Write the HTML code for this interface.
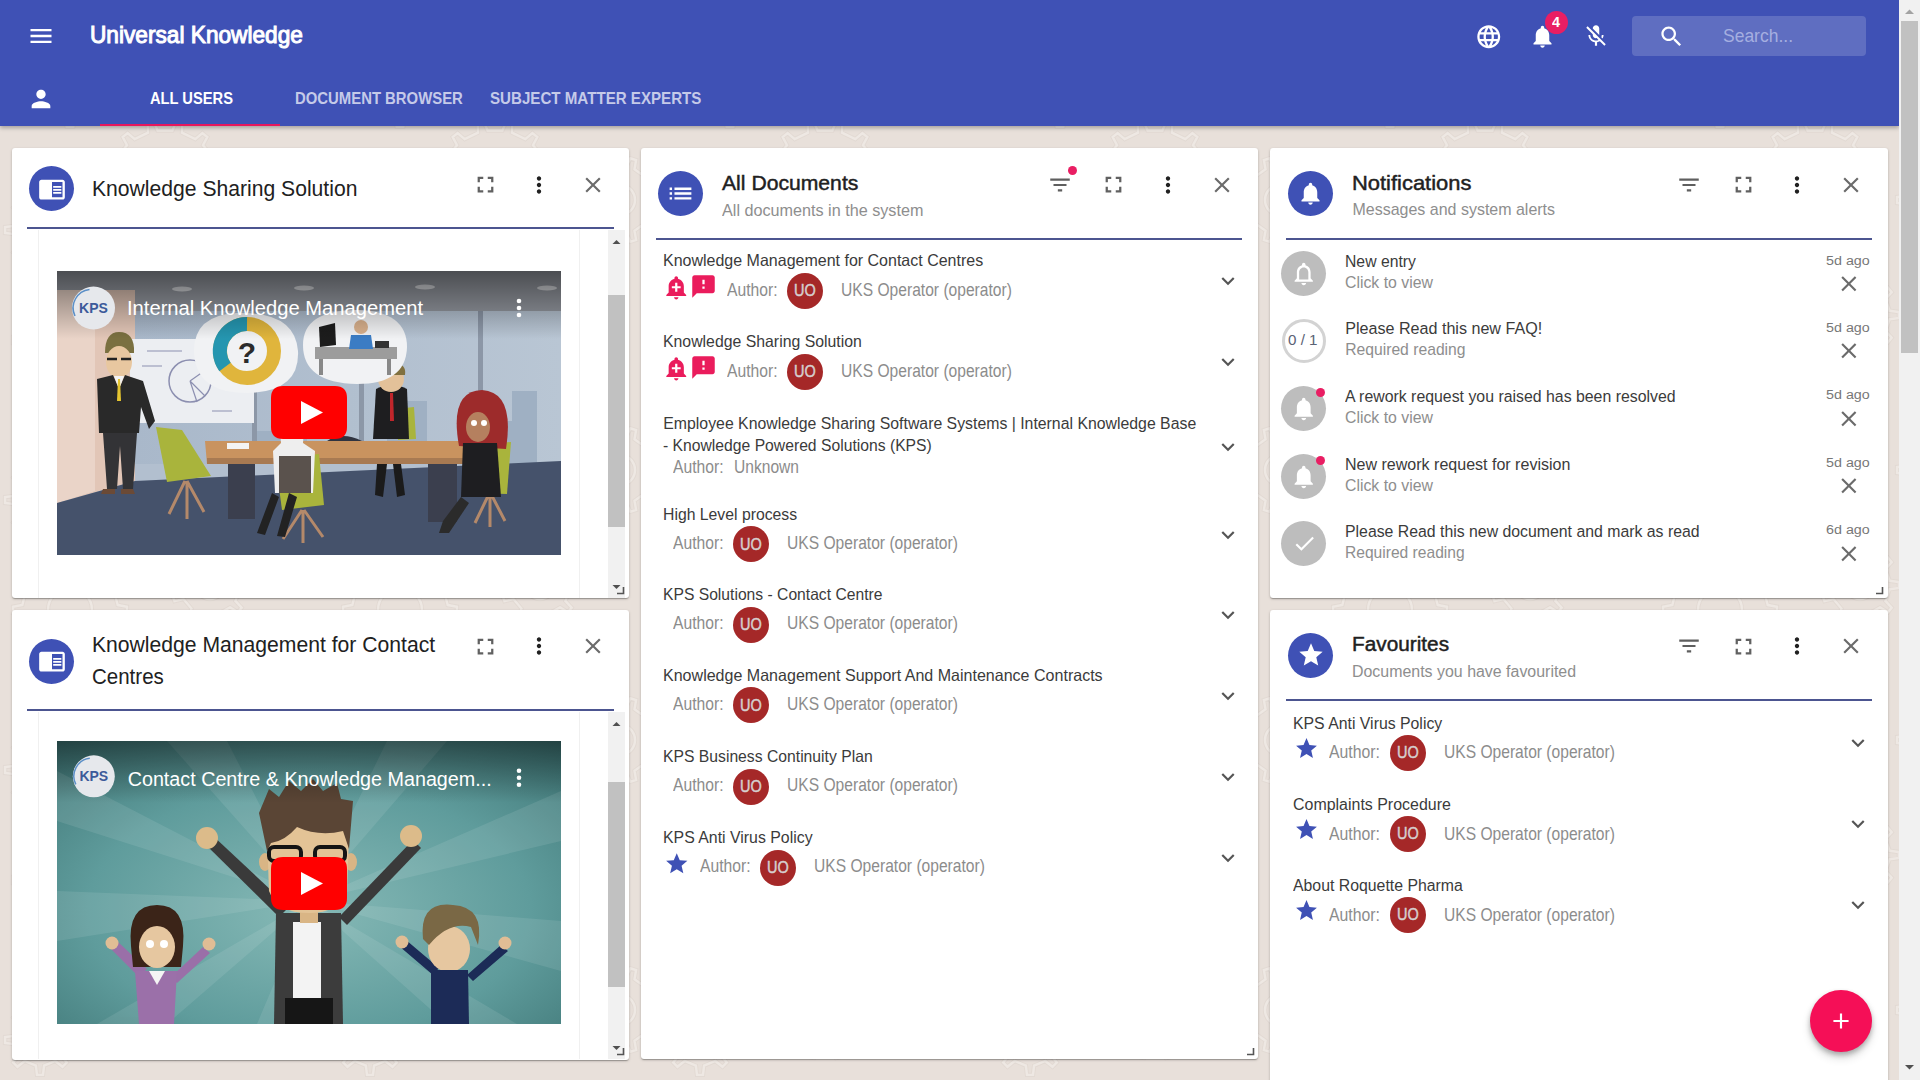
<!DOCTYPE html>
<html><head><meta charset="utf-8">
<style>
*{box-sizing:border-box;margin:0;padding:0}
html,body{width:1920px;height:1080px;overflow:hidden}
body{font-family:"Liberation Sans",sans-serif;background:#e9e1db;position:relative}
.abs{position:absolute}
svg.abs{display:block;overflow:visible}
.t{position:absolute;white-space:nowrap;line-height:normal;transform-origin:0 0}
.card{position:absolute;background:#fff;border-radius:3px;box-shadow:0 1px 3px rgba(0,0,0,.2),0 1px 1px rgba(0,0,0,.14),0 2px 1px -1px rgba(0,0,0,.12)}
</style></head><body>

<svg class="abs" style="left:0;top:0" width="1899" height="1080"><defs><pattern id="gp" width="330" height="270" patternUnits="userSpaceOnUse"><g fill="none" stroke="#dcd2cb" stroke-width="4.4" opacity=".45"><path d="M117.7 65.0 L126.9 66.7 L126.9 73.3 L117.7 75.0 L113.9 89.5 L120.9 95.6 L117.6 101.3 L108.8 98.2 L98.2 108.8 L101.3 117.6 L95.6 120.9 L89.5 113.9 L75.0 117.7 L73.3 126.9 L66.7 126.9 L65.0 117.7 L50.5 113.9 L44.4 120.9 L38.7 117.6 L41.8 108.8 L31.2 98.2 L22.4 101.3 L19.1 95.6 L26.1 89.5 L22.3 75.0 L13.1 73.3 L13.1 66.7 L22.3 65.0 L26.1 50.5 L19.1 44.4 L22.4 38.7 L31.2 41.8 L41.8 31.2 L38.7 22.4 L44.4 19.1 L50.5 26.1 L65.0 22.3 L66.7 13.1 L73.3 13.1 L75.0 22.3 L89.5 26.1 L95.6 19.1 L101.3 22.4 L98.2 31.2 L108.8 41.8 L117.6 38.7 L120.9 44.4 L113.9 50.5zM239.7 40.8 L248.9 42.0 L248.9 48.0 L239.7 49.2 L235.4 60.9 L241.7 67.7 L237.9 72.3 L230.1 67.3 L219.3 73.5 L219.7 82.8 L213.8 83.8 L211.0 75.0 L198.8 72.8 L193.1 80.2 L188.0 77.2 L191.5 68.6 L183.5 59.1 L174.5 61.1 L172.4 55.5 L180.7 51.2 L180.7 38.8 L172.4 34.5 L174.5 28.9 L183.5 30.9 L191.5 21.4 L188.0 12.8 L193.1 9.8 L198.8 17.2 L211.0 15.0 L213.8 6.2 L219.7 7.2 L219.3 16.5 L230.1 22.7 L237.9 17.7 L241.7 22.3 L235.4 29.1zM219.8 180.1 L228.9 181.8 L228.9 188.2 L219.8 189.9 L216.5 204.3 L224.0 209.9 L221.2 215.6 L212.2 213.2 L203.0 224.8 L207.3 233.0 L202.4 236.9 L195.3 230.9 L182.0 237.3 L182.3 246.6 L176.1 248.0 L172.4 239.5 L157.6 239.5 L153.9 248.0 L147.7 246.6 L148.0 237.3 L134.7 230.9 L127.6 236.9 L122.7 233.0 L127.0 224.8 L117.8 213.2 L108.8 215.6 L106.0 209.9 L113.5 204.3 L110.2 189.9 L101.1 188.2 L101.1 181.8 L110.2 180.1 L113.5 165.7 L106.0 160.1 L108.8 154.4 L117.8 156.8 L127.0 145.2 L122.7 137.0 L127.6 133.1 L134.7 139.1 L148.0 132.7 L147.7 123.4 L153.9 122.0 L157.6 130.5 L172.4 130.5 L176.1 122.0 L182.3 123.4 L182.0 132.7 L195.3 139.1 L202.4 133.1 L207.3 137.0 L203.0 145.2 L212.2 156.8 L221.2 154.4 L224.0 160.1 L216.5 165.7zM65.7 225.9 L74.9 227.0 L74.9 233.0 L65.7 234.1 L61.0 245.3 L66.8 252.5 L62.5 256.8 L55.3 251.0 L44.1 255.7 L43.0 264.9 L37.0 264.9 L35.9 255.7 L24.7 251.0 L17.5 256.8 L13.2 252.5 L19.0 245.3 L14.3 234.1 L5.1 233.0 L5.1 227.0 L14.3 225.9 L19.0 214.7 L13.2 207.5 L17.5 203.2 L24.7 209.0 L35.9 204.3 L37.0 195.1 L43.0 195.1 L44.1 204.3 L55.3 209.0 L62.5 203.2 L66.8 207.5 L61.0 214.7zM323.7 195.7 L332.9 197.0 L332.9 203.0 L323.7 204.3 L319.8 216.4 L326.5 222.8 L323.0 227.6 L314.8 223.3 L304.5 230.8 L306.1 239.9 L300.4 241.7 L296.4 233.4 L283.6 233.4 L279.6 241.7 L273.9 239.9 L275.5 230.8 L265.2 223.3 L257.0 227.6 L253.5 222.8 L260.2 216.4 L256.3 204.3 L247.1 203.0 L247.1 197.0 L256.3 195.7 L260.2 183.6 L253.5 177.2 L257.0 172.4 L265.2 176.7 L275.5 169.2 L273.9 160.1 L279.6 158.3 L283.6 166.6 L296.4 166.6 L300.4 158.3 L306.1 160.1 L304.5 169.2 L314.8 176.7 L323.0 172.4 L326.5 177.2 L319.8 183.6z"/><circle cx="70" cy="70" r="22"/><circle cx="210" cy="45" r="14"/><circle cx="165" cy="185" r="25"/><circle cx="40" cy="230" r="12"/><circle cx="290" cy="200" r="15"/></g><g fill="none" stroke="#eee8e3" stroke-width="2.4"><path d="M117.7 65.0 L126.9 66.7 L126.9 73.3 L117.7 75.0 L113.9 89.5 L120.9 95.6 L117.6 101.3 L108.8 98.2 L98.2 108.8 L101.3 117.6 L95.6 120.9 L89.5 113.9 L75.0 117.7 L73.3 126.9 L66.7 126.9 L65.0 117.7 L50.5 113.9 L44.4 120.9 L38.7 117.6 L41.8 108.8 L31.2 98.2 L22.4 101.3 L19.1 95.6 L26.1 89.5 L22.3 75.0 L13.1 73.3 L13.1 66.7 L22.3 65.0 L26.1 50.5 L19.1 44.4 L22.4 38.7 L31.2 41.8 L41.8 31.2 L38.7 22.4 L44.4 19.1 L50.5 26.1 L65.0 22.3 L66.7 13.1 L73.3 13.1 L75.0 22.3 L89.5 26.1 L95.6 19.1 L101.3 22.4 L98.2 31.2 L108.8 41.8 L117.6 38.7 L120.9 44.4 L113.9 50.5zM239.7 40.8 L248.9 42.0 L248.9 48.0 L239.7 49.2 L235.4 60.9 L241.7 67.7 L237.9 72.3 L230.1 67.3 L219.3 73.5 L219.7 82.8 L213.8 83.8 L211.0 75.0 L198.8 72.8 L193.1 80.2 L188.0 77.2 L191.5 68.6 L183.5 59.1 L174.5 61.1 L172.4 55.5 L180.7 51.2 L180.7 38.8 L172.4 34.5 L174.5 28.9 L183.5 30.9 L191.5 21.4 L188.0 12.8 L193.1 9.8 L198.8 17.2 L211.0 15.0 L213.8 6.2 L219.7 7.2 L219.3 16.5 L230.1 22.7 L237.9 17.7 L241.7 22.3 L235.4 29.1zM219.8 180.1 L228.9 181.8 L228.9 188.2 L219.8 189.9 L216.5 204.3 L224.0 209.9 L221.2 215.6 L212.2 213.2 L203.0 224.8 L207.3 233.0 L202.4 236.9 L195.3 230.9 L182.0 237.3 L182.3 246.6 L176.1 248.0 L172.4 239.5 L157.6 239.5 L153.9 248.0 L147.7 246.6 L148.0 237.3 L134.7 230.9 L127.6 236.9 L122.7 233.0 L127.0 224.8 L117.8 213.2 L108.8 215.6 L106.0 209.9 L113.5 204.3 L110.2 189.9 L101.1 188.2 L101.1 181.8 L110.2 180.1 L113.5 165.7 L106.0 160.1 L108.8 154.4 L117.8 156.8 L127.0 145.2 L122.7 137.0 L127.6 133.1 L134.7 139.1 L148.0 132.7 L147.7 123.4 L153.9 122.0 L157.6 130.5 L172.4 130.5 L176.1 122.0 L182.3 123.4 L182.0 132.7 L195.3 139.1 L202.4 133.1 L207.3 137.0 L203.0 145.2 L212.2 156.8 L221.2 154.4 L224.0 160.1 L216.5 165.7zM65.7 225.9 L74.9 227.0 L74.9 233.0 L65.7 234.1 L61.0 245.3 L66.8 252.5 L62.5 256.8 L55.3 251.0 L44.1 255.7 L43.0 264.9 L37.0 264.9 L35.9 255.7 L24.7 251.0 L17.5 256.8 L13.2 252.5 L19.0 245.3 L14.3 234.1 L5.1 233.0 L5.1 227.0 L14.3 225.9 L19.0 214.7 L13.2 207.5 L17.5 203.2 L24.7 209.0 L35.9 204.3 L37.0 195.1 L43.0 195.1 L44.1 204.3 L55.3 209.0 L62.5 203.2 L66.8 207.5 L61.0 214.7zM323.7 195.7 L332.9 197.0 L332.9 203.0 L323.7 204.3 L319.8 216.4 L326.5 222.8 L323.0 227.6 L314.8 223.3 L304.5 230.8 L306.1 239.9 L300.4 241.7 L296.4 233.4 L283.6 233.4 L279.6 241.7 L273.9 239.9 L275.5 230.8 L265.2 223.3 L257.0 227.6 L253.5 222.8 L260.2 216.4 L256.3 204.3 L247.1 203.0 L247.1 197.0 L256.3 195.7 L260.2 183.6 L253.5 177.2 L257.0 172.4 L265.2 176.7 L275.5 169.2 L273.9 160.1 L279.6 158.3 L283.6 166.6 L296.4 166.6 L300.4 158.3 L306.1 160.1 L304.5 169.2 L314.8 176.7 L323.0 172.4 L326.5 177.2 L319.8 183.6z"/><circle cx="70" cy="70" r="22"/><circle cx="210" cy="45" r="14"/><circle cx="165" cy="185" r="25"/><circle cx="40" cy="230" r="12"/><circle cx="290" cy="200" r="15"/></g></pattern></defs><rect width="1899" height="1080" fill="#e8e0da"/><rect width="1899" height="1080" fill="url(#gp)"/></svg>
<div class="abs" style="left:0px;top:0px;width:1899px;height:126px;background:#3f51b5;box-shadow:0 2px 4px rgba(0,0,0,.28)"></div>
<svg class="abs" style="left:26.70px;top:22.40px;" width="28" height="28" viewBox="0 0 24 24"><path fill="#fff" d="M3 18h18v-2H3v2zm0-5h18v-2H3v2zm0-7v2h18V6H3z"/></svg>
<div class="t" style="left:89.50px;top:20.63px;font-size:24.71px;color:#fff;-webkit-text-stroke:1.05px #fff;transform:scaleX(0.9176);">Universal Knowledge</div>
<svg class="abs" style="left:26.50px;top:84.50px;" width="28" height="28" viewBox="0 0 24 24"><path fill="#fff" d="M12 12c2.21 0 4-1.79 4-4s-1.79-4-4-4-4 1.790-4 4 1.79 4 4 4zm0 2c-2.67 0-8 1.34-8 4v2h16v-2c0-2.66-5.33-4-8-4z"/></svg>
<div class="t" style="left:149.70px;top:88.34px;font-size:17.30px;color:#fff;font-weight:bold;transform:scaleX(0.8494);">ALL USERS</div>
<div class="t" style="left:295.00px;top:88.34px;font-size:17.30px;color:#c5cae9;font-weight:bold;transform:scaleX(0.8612);">DOCUMENT BROWSER</div>
<div class="t" style="left:490.30px;top:88.34px;font-size:17.30px;color:#c5cae9;font-weight:bold;transform:scaleX(0.8749);">SUBJECT MATTER EXPERTS</div>
<div class="abs" style="left:100px;top:124px;width:180px;height:2px;background:#e8175d"></div>
<svg class="abs" style="left:1474.75px;top:22.65px;" width="27.5" height="27.5" viewBox="0 0 24 24"><path fill="#fff" d="M11.99 2C6.47 2 2 6.48 2 12s4.47 10 9.99 10C17.52 22 22 17.52 22 12S17.52 2 11.99 2zm6.93 6h-2.950c-.32-1.25-.78-2.45-1.38-3.56 1.84.63 3.37 1.91 4.33 3.56zM12 4.04c.83 1.2 1.48 2.53 1.91 3.96h-3.82c.43-1.43 1.08-2.76 1.91-3.96zM4.26 14C4.1 13.36 4 12.69 4 12s.1-1.36.26-2h3.38c-.08.66-.14 1.32-.14 2 0 .68.06 1.34.14 2H4.26zm.82 2h2.95c.32 1.25.78 2.45 1.38 3.56-1.84-.63-3.37-1.9-4.33-3.56zm2.95-8H5.08c.96-1.66 2.49-2.93 4.33-3.56C8.81 5.55 8.35 6.75 8.03 8zM12 19.96c-.83-1.2-1.48-2.53-1.91-3.96h3.82c-.43 1.43-1.08 2.76-1.91 3.960zM14.34 14H9.66c-.09-.66-.16-1.32-.16-2 0-.68.07-1.35.16-2h4.68c.09.65.16 1.32.16 2 0 .68-.07 1.34-.16 2zm.25 5.56c.6-1.11 1.06-2.31 1.38-3.56h2.95c-.96 1.65-2.49 2.93-4.33 3.56zM16.36 14c.08-.66.14-1.32.14-2 0-.68-.06-1.34-.14-2h3.38c.16.64.26 1.31.26 2s-.1 1.36-.26 2h-3.38z"/></svg>
<svg class="abs" style="left:1528.90px;top:23.20px;" width="27" height="27" viewBox="0 0 24 24"><path fill="#fff" d="M12 22c1.1 0 2-.9 2-2h-4c0 1.1.89 2 2 2zm6-6v-5c0-3.07-1.64-5.64-4.5-6.32V4c0-.83-.67-1.5-1.5-1.5s-1.5.67-1.5 1.5v.68C7.63 5.36 6 7.92 6 11v5l-2 2v1h16v-1l-2-2z"/></svg>
<div class="abs" style="left:1544.5px;top:11.0px;width:23px;height:23px;border-radius:50%;background:#e91e63"></div>
<div class="t" style="left:1552.00px;top:13.84px;font-size:14.54px;color:#fff;font-weight:bold;transform:scaleX(0.9896);">4</div>
<svg class="abs" style="left:1583.40px;top:23.00px;" width="26" height="26" viewBox="0 0 24 24"><path fill="#fff" d="M19 11h-1.7c0 .74-.16 1.43-.43 2.05l1.23 1.23c.56-.98.9-2.09.9-3.28zm-4.02.17c0-.06.02-.11.02-.17V5c0-1.66-1.34-3-3-3S9 3.34 9 5v.18l5.98 5.99zM4.27 3L3 4.27l6.01 6.01V11c0 1.66 1.33 3 2.99 3 .22 0 .44-.03.65-.08l1.66 1.66c-.71.33-1.5.52-2.31.52-2.76 0-5.3-2.1-5.3-5.1H5c0 3.41 2.72 6.23 6 6.72V21h2v-3.28c.91-.13 1.77-.45 2.54-.9L19.73 21 21 19.73 4.27 3z"/></svg>
<div class="abs" style="left:1632px;top:16px;width:234px;height:40px;background:rgba(255,255,255,.17);border-radius:4px"></div>
<svg class="abs" style="left:1657.50px;top:23.00px;" width="27" height="27" viewBox="0 0 24 24"><path fill="#fff" d="M15.5 14h-.79l-.28-.27C15.41 12.59 16 11.11 16 9.5 16 5.91 13.09 3 9.5 3S3 5.91 3 9.5 5.91 16 9.5 16c1.61 0 3.09-.59 4.23-1.57l.27.28v.79l5 4.99L20.490 19l-4.99-5zm-6 0C7.01 14 5 11.99 5 9.5S7.01 5 9.5 5 14 7.01 14 9.5 11.99 14 9.5 14z"/></svg>
<div class="t" style="left:1722.50px;top:24.83px;font-size:19.19px;color:#a5aee0;transform:scaleX(0.9116);">Search...</div>
<div class="abs" style="left:1899px;top:0px;width:21px;height:1080px;background:#f1f1f1"></div>
<div class="abs" style="left:1901px;top:21px;width:17px;height:331.6px;background:#c1c1c1"></div>
<svg class="abs" style="left:1899px;top:3px" width="21" height="18"><path d="M6 11 L10.5 6.5 L15 11z" fill="#a3a3a3"/></svg>
<svg class="abs" style="left:1899px;top:1058px" width="21" height="18"><path d="M6 7 L10.5 11.5 L15 7z" fill="#505050"/></svg>
<div class="card" style="left:11.5px;top:148px;width:617.17px;height:450px"></div>
<div class="card" style="left:11.5px;top:609.5px;width:617.17px;height:450px"></div>
<div class="card" style="left:640.67px;top:148px;width:617.67px;height:911px"></div>
<div class="card" style="left:1270.33px;top:148px;width:617.67px;height:450px"></div>
<div class="card" style="left:1270.33px;top:609.5px;width:617.67px;height:600px"></div>
<div class="abs" style="left:29.299999999999997px;top:166.2px;width:45px;height:45px;border-radius:50%;background:#3f51b5"></div>
<svg class="abs" style="left:37.80px;top:174.70px;" width="28" height="28" viewBox="0 0 24 24"><path fill="#fff" d="M13 12h7v1.5h-7zm0-2.5h7V11h-7zm0 5h7V16h-7zM21 4H3c-1.1 0-2 .9-2 2v13c0 1.1.9 2 2 2h18c1.1 0 2-.9 2-2V6c0-1.1-.9-2-2-2zm0 15h-9V6h9v13z"/></svg>
<div class="t" style="left:92.00px;top:175.60px;font-size:22.53px;color:#212121;transform:scaleX(0.9382);">Knowledge Sharing Solution</div>
<svg class="abs" style="left:471.50px;top:171.20px;" width="27" height="27" viewBox="0 0 24 24"><path fill="#616161" d="M7 14H5v5h5v-2H7v-3zm-2-4h2V7h3V5H5v5zm12 7h-3v2h5v-5h-2v3zM14 5v2h3v3h2V5h-5z"/></svg>
<svg class="abs" style="left:525.75px;top:171.70px;" width="26" height="26" viewBox="0 0 24 24"><path fill="#212121" d="M12 8c1.1 0 2-.9 2-2s-.9-2-2-2-2 .9-2 2 .9 2 2 2zm0 2c-1.1 0-2 .9-2 2s.9 2 2 2 2-.9 2-2-.9-2-2-2zm0 6c-1.1 0-2 .9-2 2s.9 2 2 2 2-.9 2-2-.9-2-2-2z"/></svg>
<svg class="abs" style="left:579.50px;top:171.70px;" width="26" height="26" viewBox="0 0 24 24"><path fill="#6b6b6b" d="M19 6.41L17.59 5 12 10.59 6.41 5 5 6.41 10.59 12 5 17.59 6.41 19 12 13.41 17.59 19 19 17.59 13.41 12z"/></svg>
<div class="abs" style="left:27px;top:227px;width:587px;height:2px;background:#4c5590"></div>
<div class="abs" style="left:29.299999999999997px;top:638.5px;width:45px;height:45px;border-radius:50%;background:#3f51b5"></div>
<svg class="abs" style="left:37.80px;top:647.00px;" width="28" height="28" viewBox="0 0 24 24"><path fill="#fff" d="M13 12h7v1.5h-7zm0-2.5h7V11h-7zm0 5h7V16h-7zM21 4H3c-1.1 0-2 .9-2 2v13c0 1.1.9 2 2 2h18c1.1 0 2-.9 2-2V6c0-1.1-.9-2-2-2zm0 15h-9V6h9v13z"/></svg>
<div class="t" style="left:92.00px;top:632.63px;font-size:21.51px;color:#212121;transform:scaleX(0.9831);">Knowledge Management for Contact</div>
<div class="t" style="left:92.00px;top:665.46px;font-size:21.37px;color:#212121;transform:scaleX(0.9597);">Centres</div>
<svg class="abs" style="left:471.50px;top:632.80px;" width="27" height="27" viewBox="0 0 24 24"><path fill="#616161" d="M7 14H5v5h5v-2H7v-3zm-2-4h2V7h3V5H5v5zm12 7h-3v2h5v-5h-2v3zM14 5v2h3v3h2V5h-5z"/></svg>
<svg class="abs" style="left:525.75px;top:633.30px;" width="26" height="26" viewBox="0 0 24 24"><path fill="#212121" d="M12 8c1.1 0 2-.9 2-2s-.9-2-2-2-2 .9-2 2 .9 2 2 2zm0 2c-1.1 0-2 .9-2 2s.9 2 2 2 2-.9 2-2-.9-2-2-2zm0 6c-1.1 0-2 .9-2 2s.9 2 2 2 2-.9 2-2-.9-2-2-2z"/></svg>
<svg class="abs" style="left:579.50px;top:633.30px;" width="26" height="26" viewBox="0 0 24 24"><path fill="#6b6b6b" d="M19 6.41L17.59 5 12 10.59 6.41 5 5 6.41 10.59 12 5 17.59 6.41 19 12 13.41 17.59 19 19 17.59 13.41 12z"/></svg>
<div class="abs" style="left:27px;top:709px;width:587px;height:2px;background:#4c5590"></div>
<div class="abs" style="left:658.1px;top:171.1px;width:45px;height:45px;border-radius:50%;background:#3f51b5"></div>
<svg class="abs" style="left:666.10px;top:179.10px;" width="29" height="29" viewBox="0 0 24 24"><path fill="#fff" d="M3 13h2v-2H3v2zm0 4h2v-2H3v2zm0-8h2V7H3v2zm4 4h14v-2H7v2zm0 4h14v-2H7v2zM7 7v2h14V7H7z"/></svg>
<div class="t" style="left:721.90px;top:171.15px;font-size:20.49px;color:#212121;-webkit-text-stroke:0.45px #212121;transform:scaleX(1.0323);">All Documents</div>
<div class="t" style="left:721.90px;top:200.95px;font-size:16.35px;color:#8e8e8e;transform:scaleX(0.9898);">All documents in the system</div>
<svg class="abs" style="left:1046.50px;top:171.80px;" width="26" height="26" viewBox="0 0 24 24"><path fill="#5f5f5f" d="M10 18h4v-2h-4v2zM3 6v2h18V6H3zm3 7h12v-2H6v2z"/></svg>
<div class="abs" style="left:1068.0px;top:166.3px;width:9px;height:9px;border-radius:50%;background:#e91e63"></div>
<svg class="abs" style="left:1100.30px;top:171.30px;" width="27" height="27" viewBox="0 0 24 24"><path fill="#616161" d="M7 14H5v5h5v-2H7v-3zm-2-4h2V7h3V5H5v5zm12 7h-3v2h5v-5h-2v3zM14 5v2h3v3h2V5h-5z"/></svg>
<svg class="abs" style="left:1154.60px;top:171.80px;" width="26" height="26" viewBox="0 0 24 24"><path fill="#212121" d="M12 8c1.1 0 2-.9 2-2s-.9-2-2-2-2 .9-2 2 .9 2 2 2zm0 2c-1.1 0-2 .9-2 2s.9 2 2 2 2-.9 2-2-.9-2-2-2zm0 6c-1.1 0-2 .9-2 2s.9 2 2 2 2-.9 2-2-.9-2-2-2z"/></svg>
<svg class="abs" style="left:1208.50px;top:171.80px;" width="26" height="26" viewBox="0 0 24 24"><path fill="#6b6b6b" d="M19 6.41L17.59 5 12 10.59 6.41 5 5 6.41 10.59 12 5 17.59 6.41 19 12 13.41 17.59 19 19 17.59 13.41 12z"/></svg>
<div class="abs" style="left:656px;top:237.5px;width:586px;height:2px;background:#4c5590"></div>
<div class="abs" style="left:1288.0px;top:170.8px;width:45px;height:45px;border-radius:50%;background:#3f51b5"></div>
<svg class="abs" style="left:1297.00px;top:179.80px;" width="27" height="27" viewBox="0 0 24 24"><path fill="#fff" d="M12 22c1.1 0 2-.9 2-2h-4c0 1.1.89 2 2 2zm6-6v-5c0-3.07-1.64-5.64-4.5-6.32V4c0-.83-.67-1.5-1.5-1.5s-1.5.67-1.5 1.5v.68C7.63 5.36 6 7.92 6 11v5l-2 2v1h16v-1l-2-2z"/></svg>
<div class="t" style="left:1351.50px;top:171.32px;font-size:20.64px;color:#212121;-webkit-text-stroke:0.45px #212121;transform:scaleX(1.0630);">Notifications</div>
<div class="t" style="left:1352.50px;top:201.03px;font-size:15.99px;color:#8e8e8e;">Messages and system alerts</div>
<svg class="abs" style="left:1676.00px;top:171.80px;" width="26" height="26" viewBox="0 0 24 24"><path fill="#5f5f5f" d="M10 18h4v-2h-4v2zM3 6v2h18V6H3zm3 7h12v-2H6v2z"/></svg>
<svg class="abs" style="left:1729.50px;top:171.30px;" width="27" height="27" viewBox="0 0 24 24"><path fill="#616161" d="M7 14H5v5h5v-2H7v-3zm-2-4h2V7h3V5H5v5zm12 7h-3v2h5v-5h-2v3zM14 5v2h3v3h2V5h-5z"/></svg>
<svg class="abs" style="left:1784.00px;top:171.80px;" width="26" height="26" viewBox="0 0 24 24"><path fill="#212121" d="M12 8c1.1 0 2-.9 2-2s-.9-2-2-2-2 .9-2 2 .9 2 2 2zm0 2c-1.1 0-2 .9-2 2s.9 2 2 2 2-.9 2-2-.9-2-2-2zm0 6c-1.1 0-2 .9-2 2s.9 2 2 2 2-.9 2-2-.9-2-2-2z"/></svg>
<svg class="abs" style="left:1838.00px;top:171.80px;" width="26" height="26" viewBox="0 0 24 24"><path fill="#6b6b6b" d="M19 6.41L17.59 5 12 10.59 6.41 5 5 6.41 10.59 12 5 17.59 6.41 19 12 13.41 17.59 19 19 17.59 13.41 12z"/></svg>
<div class="abs" style="left:1286px;top:237.5px;width:586px;height:2px;background:#4c5590"></div>
<div class="abs" style="left:1288.0px;top:632.5px;width:45px;height:45px;border-radius:50%;background:#3f51b5"></div>
<svg class="abs" style="left:1296.50px;top:641.00px;" width="28" height="28" viewBox="0 0 24 24"><path fill="#fff" d="M12 17.27L18.18 21l-1.64-7.03L22 9.24l-7.19-.61L12 2 9.19 8.63 2 9.24l5.46 4.73L5.82 21z"/></svg>
<div class="t" style="left:1352.00px;top:632.48px;font-size:20.79px;color:#212121;-webkit-text-stroke:0.45px #212121;">Favourites</div>
<div class="t" style="left:1351.50px;top:663.16px;font-size:15.84px;color:#8e8e8e;transform:scaleX(1.0067);">Documents you have favourited</div>
<svg class="abs" style="left:1676.00px;top:633.30px;" width="26" height="26" viewBox="0 0 24 24"><path fill="#5f5f5f" d="M10 18h4v-2h-4v2zM3 6v2h18V6H3zm3 7h12v-2H6v2z"/></svg>
<svg class="abs" style="left:1729.50px;top:632.80px;" width="27" height="27" viewBox="0 0 24 24"><path fill="#616161" d="M7 14H5v5h5v-2H7v-3zm-2-4h2V7h3V5H5v5zm12 7h-3v2h5v-5h-2v3zM14 5v2h3v3h2V5h-5z"/></svg>
<svg class="abs" style="left:1784.00px;top:633.30px;" width="26" height="26" viewBox="0 0 24 24"><path fill="#212121" d="M12 8c1.1 0 2-.9 2-2s-.9-2-2-2-2 .9-2 2 .9 2 2 2zm0 2c-1.1 0-2 .9-2 2s.9 2 2 2 2-.9 2-2-.9-2-2-2zm0 6c-1.1 0-2 .9-2 2s.9 2 2 2 2-.9 2-2-.9-2-2-2z"/></svg>
<svg class="abs" style="left:1838.00px;top:633.30px;" width="26" height="26" viewBox="0 0 24 24"><path fill="#6b6b6b" d="M19 6.41L17.59 5 12 10.59 6.41 5 5 6.41 10.59 12 5 17.59 6.41 19 12 13.41 17.59 19 19 17.59 13.41 12z"/></svg>
<div class="abs" style="left:1286px;top:699.3px;width:586px;height:2px;background:#4c5590"></div>
<div class="t" style="left:663.30px;top:251.37px;font-size:16.72px;color:#3b3b3b;transform:scaleX(0.9578);">Knowledge Management for Contact Centres</div>
<svg class="abs" style="left:663.35px;top:273.65px;" width="26.5" height="26.5" viewBox="0 0 24 24"><path fill="#ea1c5c" d="M10.01 21.01c0 1.1.89 1.99 1.99 1.99s1.99-.89 1.99-1.99h-3.98zm8.87-4.19V11c0-3.25-2.25-5.970-5.29-6.69v-.72C13.59 2.71 12.88 2 12 2s-1.59.71-1.59 1.59v.72C7.37 5.03 5.12 7.75 5.12 11v5.82L3 18.94V20h18v-1.06l-2.12-2.12zM16 13.01h-3v3h-2v-3H8V11h3V8h2v3h3v2.01z"/></svg>
<svg class="abs" style="left:690.00px;top:273.20px;" width="27" height="27" viewBox="0 0 24 24"><path fill="#ea1c5c" d="M20 2H4c-1.1 0-1.99.9-1.99 2L2 22l4-4h14c1.1 0 2-.9 2-2V4c0-1.1-.9-2-2-2zm-7 12h-2v-2h2v2zm0-4h-2V6h2v4z"/></svg>
<div class="t" style="left:726.50px;top:279.78px;font-size:18.02px;color:#8c8c8c;transform:scaleX(0.8690);">Author:</div>
<div class="abs" style="left:787.0px;top:273.1px;width:36px;height:36px;border-radius:50%;background:#a52828"></div>
<div class="t" style="left:794.00px;top:281.23px;font-size:16.42px;color:#d6cfcf;-webkit-text-stroke:0.45px #d6cfcf;transform:scaleX(0.8848);">UO</div>
<div class="t" style="left:841.00px;top:279.78px;font-size:18.02px;color:#8c8c8c;transform:scaleX(0.8665);">UKS Operator (operator)</div>
<svg class="abs" style="left:1214.50px;top:268.40px;" width="26" height="26" viewBox="0 0 24 24"><path fill="#555" d="M16.59 8.59L12 13.17 7.41 8.59 6 10l6 6 6-6z"/></svg>
<div class="t" style="left:663.30px;top:332.37px;font-size:16.72px;color:#3b3b3b;transform:scaleX(0.9475);">Knowledge Sharing Solution</div>
<svg class="abs" style="left:663.35px;top:354.65px;" width="26.5" height="26.5" viewBox="0 0 24 24"><path fill="#ea1c5c" d="M10.01 21.01c0 1.1.89 1.99 1.99 1.99s1.99-.89 1.99-1.99h-3.98zm8.87-4.19V11c0-3.25-2.25-5.970-5.29-6.69v-.72C13.59 2.71 12.88 2 12 2s-1.59.71-1.59 1.59v.72C7.37 5.03 5.12 7.75 5.12 11v5.82L3 18.94V20h18v-1.06l-2.12-2.12zM16 13.01h-3v3h-2v-3H8V11h3V8h2v3h3v2.01z"/></svg>
<svg class="abs" style="left:690.00px;top:354.20px;" width="27" height="27" viewBox="0 0 24 24"><path fill="#ea1c5c" d="M20 2H4c-1.1 0-1.99.9-1.99 2L2 22l4-4h14c1.1 0 2-.9 2-2V4c0-1.1-.9-2-2-2zm-7 12h-2v-2h2v2zm0-4h-2V6h2v4z"/></svg>
<div class="t" style="left:726.50px;top:360.78px;font-size:18.02px;color:#8c8c8c;transform:scaleX(0.8690);">Author:</div>
<div class="abs" style="left:787.0px;top:354.1px;width:36px;height:36px;border-radius:50%;background:#a52828"></div>
<div class="t" style="left:794.00px;top:362.23px;font-size:16.42px;color:#d6cfcf;-webkit-text-stroke:0.45px #d6cfcf;transform:scaleX(0.8848);">UO</div>
<div class="t" style="left:841.00px;top:360.78px;font-size:18.02px;color:#8c8c8c;transform:scaleX(0.8665);">UKS Operator (operator)</div>
<svg class="abs" style="left:1214.50px;top:349.40px;" width="26" height="26" viewBox="0 0 24 24"><path fill="#555" d="M16.59 8.59L12 13.17 7.41 8.59 6 10l6 6 6-6z"/></svg>
<div class="t" style="left:663.30px;top:414.86px;font-size:15.84px;color:#3b3b3b;">Employee Knowledge Sharing Software Systems | Internal Knowledge Base</div>
<div class="t" style="left:663.30px;top:436.19px;font-size:16.13px;color:#3b3b3b;transform:scaleX(0.9746);">- Knowledge Powered Solutions (KPS)</div>
<div class="t" style="left:672.50px;top:457.38px;font-size:18.02px;color:#8c8c8c;transform:scaleX(0.8690);">Author:</div>
<div class="t" style="left:733.50px;top:457.38px;font-size:18.02px;color:#8c8c8c;transform:scaleX(0.8650);">Unknown</div>
<svg class="abs" style="left:1214.50px;top:434.00px;" width="26" height="26" viewBox="0 0 24 24"><path fill="#555" d="M16.59 8.59L12 13.17 7.41 8.59 6 10l6 6 6-6z"/></svg>
<div class="t" style="left:663.30px;top:504.67px;font-size:16.72px;color:#3b3b3b;transform:scaleX(0.9440);">High Level process</div>
<div class="t" style="left:672.50px;top:533.08px;font-size:18.02px;color:#8c8c8c;transform:scaleX(0.8690);">Author:</div>
<div class="abs" style="left:733.0px;top:526.4px;width:36px;height:36px;border-radius:50%;background:#a52828"></div>
<div class="t" style="left:740.00px;top:534.53px;font-size:16.42px;color:#d6cfcf;-webkit-text-stroke:0.45px #d6cfcf;transform:scaleX(0.8848);">UO</div>
<div class="t" style="left:787.00px;top:533.08px;font-size:18.02px;color:#8c8c8c;transform:scaleX(0.8665);">UKS Operator (operator)</div>
<svg class="abs" style="left:1214.50px;top:521.70px;" width="26" height="26" viewBox="0 0 24 24"><path fill="#555" d="M16.59 8.59L12 13.17 7.41 8.59 6 10l6 6 6-6z"/></svg>
<div class="t" style="left:663.30px;top:584.87px;font-size:16.72px;color:#3b3b3b;transform:scaleX(0.9379);">KPS Solutions - Contact Centre</div>
<div class="t" style="left:672.50px;top:613.28px;font-size:18.02px;color:#8c8c8c;transform:scaleX(0.8690);">Author:</div>
<div class="abs" style="left:733.0px;top:606.6px;width:36px;height:36px;border-radius:50%;background:#a52828"></div>
<div class="t" style="left:740.00px;top:614.73px;font-size:16.42px;color:#d6cfcf;-webkit-text-stroke:0.45px #d6cfcf;transform:scaleX(0.8848);">UO</div>
<div class="t" style="left:787.00px;top:613.28px;font-size:18.02px;color:#8c8c8c;transform:scaleX(0.8665);">UKS Operator (operator)</div>
<svg class="abs" style="left:1214.50px;top:601.90px;" width="26" height="26" viewBox="0 0 24 24"><path fill="#555" d="M16.59 8.59L12 13.17 7.41 8.59 6 10l6 6 6-6z"/></svg>
<div class="t" style="left:663.30px;top:665.67px;font-size:16.72px;color:#3b3b3b;transform:scaleX(0.9604);">Knowledge Management Support And Maintenance Contracts</div>
<div class="t" style="left:672.50px;top:694.08px;font-size:18.02px;color:#8c8c8c;transform:scaleX(0.8690);">Author:</div>
<div class="abs" style="left:733.0px;top:687.4px;width:36px;height:36px;border-radius:50%;background:#a52828"></div>
<div class="t" style="left:740.00px;top:695.53px;font-size:16.42px;color:#d6cfcf;-webkit-text-stroke:0.45px #d6cfcf;transform:scaleX(0.8848);">UO</div>
<div class="t" style="left:787.00px;top:694.08px;font-size:18.02px;color:#8c8c8c;transform:scaleX(0.8665);">UKS Operator (operator)</div>
<svg class="abs" style="left:1214.50px;top:682.70px;" width="26" height="26" viewBox="0 0 24 24"><path fill="#555" d="M16.59 8.59L12 13.17 7.41 8.59 6 10l6 6 6-6z"/></svg>
<div class="t" style="left:663.30px;top:746.77px;font-size:16.72px;color:#3b3b3b;transform:scaleX(0.9408);">KPS Business Continuity Plan</div>
<div class="t" style="left:672.50px;top:775.18px;font-size:18.02px;color:#8c8c8c;transform:scaleX(0.8690);">Author:</div>
<div class="abs" style="left:733.0px;top:768.5px;width:36px;height:36px;border-radius:50%;background:#a52828"></div>
<div class="t" style="left:740.00px;top:776.63px;font-size:16.42px;color:#d6cfcf;-webkit-text-stroke:0.45px #d6cfcf;transform:scaleX(0.8848);">UO</div>
<div class="t" style="left:787.00px;top:775.18px;font-size:18.02px;color:#8c8c8c;transform:scaleX(0.8665);">UKS Operator (operator)</div>
<svg class="abs" style="left:1214.50px;top:763.80px;" width="26" height="26" viewBox="0 0 24 24"><path fill="#555" d="M16.59 8.59L12 13.17 7.41 8.59 6 10l6 6 6-6z"/></svg>
<div class="t" style="left:663.30px;top:827.77px;font-size:16.72px;color:#3b3b3b;transform:scaleX(0.9497);">KPS Anti Virus Policy</div>
<svg class="abs" style="left:663.85px;top:851.15px;" width="25.5" height="25.5" viewBox="0 0 24 24"><path fill="#3f51b5" d="M12 17.27L18.18 21l-1.64-7.03L22 9.24l-7.19-.61L12 2 9.19 8.63 2 9.24l5.46 4.73L5.82 21z"/></svg>
<div class="t" style="left:699.50px;top:856.18px;font-size:18.02px;color:#8c8c8c;transform:scaleX(0.8690);">Author:</div>
<div class="abs" style="left:760.0px;top:849.5px;width:36px;height:36px;border-radius:50%;background:#a52828"></div>
<div class="t" style="left:767.00px;top:857.63px;font-size:16.42px;color:#d6cfcf;-webkit-text-stroke:0.45px #d6cfcf;transform:scaleX(0.8848);">UO</div>
<div class="t" style="left:814.00px;top:856.18px;font-size:18.02px;color:#8c8c8c;transform:scaleX(0.8665);">UKS Operator (operator)</div>
<svg class="abs" style="left:1214.50px;top:844.80px;" width="26" height="26" viewBox="0 0 24 24"><path fill="#555" d="M16.59 8.59L12 13.17 7.41 8.59 6 10l6 6 6-6z"/></svg>
<div class="abs" style="left:1281.1px;top:251.10000000000002px;width:45px;height:45px;border-radius:50%;background:#bdbdbd"></div>
<svg class="abs" style="left:1290.05px;top:260.05px;" width="27.5" height="27.5" viewBox="0 0 24 24"><path fill="#fff" d="M12 22c1.1 0 2-.9 2-2h-4c0 1.1.9 2 2 2zm6-6v-5c0-3.07-1.63-5.64-4.5-6.32V4c0-.83-.67-1.5-1.5-1.5s-1.5.67-1.5 1.5v.68C7.64 5.36 6 7.92 6 11v5l-2 2v1h16v-1l-2-2zm-2 1H8v-6c0-2.48 1.51-4.5 4-4.5s4 2.02 4 4.5v6z"/></svg>
<div class="t" style="left:1345.20px;top:252.19px;font-size:16.13px;color:#3b3b3b;transform:scaleX(0.9776);">New entry</div>
<div class="t" style="left:1345.20px;top:274.49px;font-size:15.70px;color:#8e8e8e;transform:scaleX(1.0088);">Click to view</div>
<div class="t" style="left:1825.60px;top:252.63px;font-size:13.66px;color:#777;transform:scaleX(1.0481);">5d ago</div>
<svg class="abs" style="left:1836.34px;top:270.74px;" width="25.714285714285715" height="25.714285714285715" viewBox="0 0 24 24"><path fill="#6b6b6b" d="M19 6.41L17.59 5 12 10.59 6.41 5 5 6.41 10.59 12 5 17.59 6.41 19 12 13.41 17.59 19 19 17.59 13.41 12z"/></svg>
<div class="abs" style="left:1281.6px;top:318.5px;width:44px;height:44px;border-radius:50%;border:3px solid #d3d3d3;background:#fff"></div>
<div class="t" style="left:1288.30px;top:332.07px;font-size:14.39px;color:#5a6275;transform:scaleX(1.0536);">0 / 1</div>
<div class="t" style="left:1345.20px;top:319.09px;font-size:16.13px;color:#3b3b3b;">Please Read this new FAQ!</div>
<div class="t" style="left:1345.20px;top:341.39px;font-size:15.70px;color:#8e8e8e;">Required reading</div>
<div class="t" style="left:1825.60px;top:319.53px;font-size:13.66px;color:#777;transform:scaleX(1.0481);">5d ago</div>
<svg class="abs" style="left:1836.34px;top:337.64px;" width="25.714285714285715" height="25.714285714285715" viewBox="0 0 24 24"><path fill="#6b6b6b" d="M19 6.41L17.59 5 12 10.59 6.41 5 5 6.41 10.59 12 5 17.59 6.41 19 12 13.41 17.59 19 19 17.59 13.41 12z"/></svg>
<div class="abs" style="left:1281.1px;top:385.9px;width:45px;height:45px;border-radius:50%;background:#bdbdbd"></div>
<svg class="abs" style="left:1290.05px;top:394.85px;" width="27.5" height="27.5" viewBox="0 0 24 24"><path fill="#fff" d="M12 22c1.1 0 2-.9 2-2h-4c0 1.1.89 2 2 2zm6-6v-5c0-3.07-1.64-5.64-4.5-6.32V4c0-.83-.67-1.5-1.5-1.5s-1.5.67-1.5 1.5v.68C7.63 5.36 6 7.92 6 11v5l-2 2v1h16v-1l-2-2z"/></svg>
<div class="abs" style="left:1315.6px;top:387.7px;width:9px;height:9px;border-radius:50%;background:#e91e63"></div>
<div class="t" style="left:1345.20px;top:386.99px;font-size:16.13px;color:#3b3b3b;transform:scaleX(0.9845);">A rework request you raised has been resolved</div>
<div class="t" style="left:1345.20px;top:409.29px;font-size:15.70px;color:#8e8e8e;transform:scaleX(1.0088);">Click to view</div>
<div class="t" style="left:1825.60px;top:387.43px;font-size:13.66px;color:#777;transform:scaleX(1.0481);">5d ago</div>
<svg class="abs" style="left:1836.34px;top:405.54px;" width="25.714285714285715" height="25.714285714285715" viewBox="0 0 24 24"><path fill="#6b6b6b" d="M19 6.41L17.59 5 12 10.59 6.41 5 5 6.41 10.59 12 5 17.59 6.41 19 12 13.41 17.59 19 19 17.59 13.41 12z"/></svg>
<div class="abs" style="left:1281.1px;top:453.8px;width:45px;height:45px;border-radius:50%;background:#bdbdbd"></div>
<svg class="abs" style="left:1290.05px;top:462.75px;" width="27.5" height="27.5" viewBox="0 0 24 24"><path fill="#fff" d="M12 22c1.1 0 2-.9 2-2h-4c0 1.1.89 2 2 2zm6-6v-5c0-3.07-1.64-5.64-4.5-6.32V4c0-.83-.67-1.5-1.5-1.5s-1.5.67-1.5 1.5v.68C7.63 5.36 6 7.92 6 11v5l-2 2v1h16v-1l-2-2z"/></svg>
<div class="abs" style="left:1315.6px;top:455.6px;width:9px;height:9px;border-radius:50%;background:#e91e63"></div>
<div class="t" style="left:1345.20px;top:454.89px;font-size:16.13px;color:#3b3b3b;transform:scaleX(0.9949);">New rework request for revision</div>
<div class="t" style="left:1345.20px;top:477.19px;font-size:15.70px;color:#8e8e8e;transform:scaleX(1.0088);">Click to view</div>
<div class="t" style="left:1825.60px;top:455.33px;font-size:13.66px;color:#777;transform:scaleX(1.0481);">5d ago</div>
<svg class="abs" style="left:1836.34px;top:473.44px;" width="25.714285714285715" height="25.714285714285715" viewBox="0 0 24 24"><path fill="#6b6b6b" d="M19 6.41L17.59 5 12 10.59 6.41 5 5 6.41 10.59 12 5 17.59 6.41 19 12 13.41 17.59 19 19 17.59 13.41 12z"/></svg>
<div class="abs" style="left:1281.1px;top:520.9px;width:45px;height:45px;border-radius:50%;background:#bdbdbd"></div>
<svg class="abs" style="left:1291.50px;top:531.40px;" width="25" height="25" viewBox="0 0 24 24"><path fill="#fff" d="M9 16.17L4.83 12l-1.42 1.41L9 19 21 7l-1.41-1.41z"/></svg>
<div class="t" style="left:1345.20px;top:521.99px;font-size:16.13px;color:#3b3b3b;transform:scaleX(0.9825);">Please Read this new document and mark as read</div>
<div class="t" style="left:1345.20px;top:544.29px;font-size:15.70px;color:#8e8e8e;transform:scaleX(0.9939);">Required reading</div>
<div class="t" style="left:1825.60px;top:522.43px;font-size:13.66px;color:#777;transform:scaleX(1.0481);">6d ago</div>
<svg class="abs" style="left:1836.34px;top:540.54px;" width="25.714285714285715" height="25.714285714285715" viewBox="0 0 24 24"><path fill="#6b6b6b" d="M19 6.41L17.59 5 12 10.59 6.41 5 5 6.41 10.59 12 5 17.59 6.41 19 12 13.41 17.59 19 19 17.59 13.41 12z"/></svg>
<div class="t" style="left:1293.30px;top:713.63px;font-size:16.42px;color:#3b3b3b;transform:scaleX(0.9645);">KPS Anti Virus Policy</div>
<svg class="abs" style="left:1294.10px;top:735.50px;" width="25" height="25" viewBox="0 0 24 24"><path fill="#3f51b5" d="M12 17.27L18.18 21l-1.64-7.03L22 9.24l-7.19-.61L12 2 9.19 8.63 2 9.24l5.46 4.73L5.82 21z"/></svg>
<div class="t" style="left:1329.30px;top:742.45px;font-size:17.73px;color:#8c8c8c;transform:scaleX(0.8920);">Author:</div>
<div class="abs" style="left:1390.0px;top:734.8px;width:36px;height:36px;border-radius:50%;background:#a52828"></div>
<div class="t" style="left:1397.00px;top:742.93px;font-size:16.42px;color:#d6cfcf;-webkit-text-stroke:0.45px #d6cfcf;transform:scaleX(0.8848);">UO</div>
<div class="t" style="left:1444.00px;top:742.45px;font-size:17.73px;color:#8c8c8c;transform:scaleX(0.8807);">UKS Operator (operator)</div>
<svg class="abs" style="left:1844.50px;top:729.50px;" width="26" height="26" viewBox="0 0 24 24"><path fill="#555" d="M16.59 8.59L12 13.17 7.41 8.59 6 10l6 6 6-6z"/></svg>
<div class="t" style="left:1293.30px;top:794.73px;font-size:16.42px;color:#3b3b3b;transform:scaleX(0.9723);">Complaints Procedure</div>
<svg class="abs" style="left:1294.10px;top:816.60px;" width="25" height="25" viewBox="0 0 24 24"><path fill="#3f51b5" d="M12 17.27L18.18 21l-1.64-7.03L22 9.24l-7.19-.61L12 2 9.19 8.63 2 9.24l5.46 4.73L5.82 21z"/></svg>
<div class="t" style="left:1329.30px;top:823.55px;font-size:17.73px;color:#8c8c8c;transform:scaleX(0.8920);">Author:</div>
<div class="abs" style="left:1390.0px;top:815.8999999999999px;width:36px;height:36px;border-radius:50%;background:#a52828"></div>
<div class="t" style="left:1397.00px;top:824.03px;font-size:16.42px;color:#d6cfcf;-webkit-text-stroke:0.45px #d6cfcf;transform:scaleX(0.8848);">UO</div>
<div class="t" style="left:1444.00px;top:823.55px;font-size:17.73px;color:#8c8c8c;transform:scaleX(0.8807);">UKS Operator (operator)</div>
<svg class="abs" style="left:1844.50px;top:810.60px;" width="26" height="26" viewBox="0 0 24 24"><path fill="#555" d="M16.59 8.59L12 13.17 7.41 8.59 6 10l6 6 6-6z"/></svg>
<div class="t" style="left:1293.30px;top:875.83px;font-size:16.42px;color:#3b3b3b;transform:scaleX(0.9647);">About Roquette Pharma</div>
<svg class="abs" style="left:1294.10px;top:897.70px;" width="25" height="25" viewBox="0 0 24 24"><path fill="#3f51b5" d="M12 17.27L18.18 21l-1.64-7.03L22 9.24l-7.19-.61L12 2 9.19 8.63 2 9.24l5.46 4.73L5.82 21z"/></svg>
<div class="t" style="left:1329.30px;top:904.65px;font-size:17.73px;color:#8c8c8c;transform:scaleX(0.8920);">Author:</div>
<div class="abs" style="left:1390.0px;top:896.9999999999999px;width:36px;height:36px;border-radius:50%;background:#a52828"></div>
<div class="t" style="left:1397.00px;top:905.13px;font-size:16.42px;color:#d6cfcf;-webkit-text-stroke:0.45px #d6cfcf;transform:scaleX(0.8848);">UO</div>
<div class="t" style="left:1444.00px;top:904.65px;font-size:17.73px;color:#8c8c8c;transform:scaleX(0.8807);">UKS Operator (operator)</div>
<svg class="abs" style="left:1844.50px;top:891.70px;" width="26" height="26" viewBox="0 0 24 24"><path fill="#555" d="M16.59 8.59L12 13.17 7.41 8.59 6 10l6 6 6-6z"/></svg>
<div class="abs" style="left:1809.5px;top:990.0px;width:62px;height:62px;border-radius:50%;background:#f50f57;box-shadow:0 3px 5px rgba(0,0,0,.25),0 6px 10px rgba(0,0,0,.14)"></div>
<svg class="abs" style="left:1827.50px;top:1008.00px;" width="26" height="26" viewBox="0 0 24 24"><path fill="#fff" d="M19 13h-6v6h-2v-6H5v-2h6V5h2v6h6v2z"/></svg>
<div class="abs" style="left:37.5px;top:230px;width:1px;height:368px;background:#f0f0f0"></div>
<div class="abs" style="left:579px;top:230px;width:1px;height:368px;background:#f0f0f0"></div>
<div class="abs" style="left:608px;top:230px;width:17px;height:368px;background:#f1f1f1"></div>
<div class="abs" style="left:608px;top:295px;width:17px;height:232px;background:#c1c1c1"></div>
<svg class="abs" style="left:608px;top:236px" width="17" height="12"><path d="M4.5 8 L8.5 4 L12.5 8z" fill="#505050"/></svg>
<svg class="abs" style="left:608px;top:581px" width="17" height="12"><path d="M4.5 4 L8.5 8 L12.5 4z" fill="#505050"/></svg>
<svg class="abs" style="left:616px;top:587px" width="10" height="8"><path d="M7.5 0 V6.5 H1" stroke="#555" stroke-width="1.6" fill="none"/></svg>
<div class="abs" style="left:37.5px;top:712px;width:1px;height:347px;background:#f0f0f0"></div>
<div class="abs" style="left:579px;top:712px;width:1px;height:347px;background:#f0f0f0"></div>
<div class="abs" style="left:608px;top:712px;width:17px;height:347px;background:#f1f1f1"></div>
<div class="abs" style="left:608px;top:782px;width:17px;height:205px;background:#c1c1c1"></div>
<svg class="abs" style="left:608px;top:718px" width="17" height="12"><path d="M4.5 8 L8.5 4 L12.5 8z" fill="#505050"/></svg>
<svg class="abs" style="left:608px;top:1042px" width="17" height="12"><path d="M4.5 4 L8.5 8 L12.5 4z" fill="#505050"/></svg>
<svg class="abs" style="left:616px;top:1048px" width="10" height="8"><path d="M7.5 0 V6.5 H1" stroke="#555" stroke-width="1.6" fill="none"/></svg>
<svg class="abs" style="left:57px;top:271px" width="504" height="284" viewBox="0 0 504 284">
<defs><linearGradient id="g1" x1="0" y1="0" x2="0" y2="1"><stop offset="0" stop-color="#000" stop-opacity=".5"/><stop offset="1" stop-color="#000" stop-opacity="0"/></linearGradient>
<linearGradient id="win" x1="0" y1="0" x2="1" y2="0"><stop offset="0" stop-color="#a9b8ca"/><stop offset="1" stop-color="#b9c6d4"/></linearGradient></defs>
<rect width="504" height="284" fill="#b2bfcf"/>
<rect x="0" y="0" width="504" height="42" fill="#979ba3"/>
<ellipse cx="125" cy="18" rx="10" ry="2.5" fill="#d8dade"/><ellipse cx="247" cy="17" rx="10" ry="2.5" fill="#d8dade"/><ellipse cx="368" cy="16" rx="10" ry="2.5" fill="#d8dade"/><ellipse cx="490" cy="17" rx="10" ry="2.5" fill="#d8dade"/>
<path d="M78 40 H504 V193 H78z" fill="url(#win)"/>
<path d="M200 193 V160 H225 V140 H250 V193z M330 193 V150 H345 V130 H370 V193z M430 193 V150 H455 V120 H480 V193z" fill="#9fb0c3"/>
<rect x="195" y="40" width="5" height="153" fill="#8c97a7"/><rect x="302" y="40" width="5" height="153" fill="#8c97a7"/><rect x="421" y="40" width="5" height="153" fill="#8c97a7"/>
<path d="M0 19 H78 V210 L0 232z" fill="#e2c6b7"/>
<path d="M0 19 H38 V220 L0 232z" fill="#ead4c8"/>
<rect x="73" y="68" width="124" height="84" fill="#eceef2"/>
<circle cx="133" cy="110" r="21" fill="none" stroke="#8c8fb0" stroke-width="1.5"/><path d="M133 110 L150 98 M133 110 L148 125 M133 110 L140 131" stroke="#8c8fb0" stroke-width="1.2"/>
<path d="M90 80 H125 M150 85 H180 M85 95 H105 M155 140 H175" stroke="#8c8fb0" stroke-width="1.2"/>
<path d="M0 232 L78 210 L504 190 V284 H0z" fill="#45526b"/>
<path d="M148 170 H411 L409 193 H150z" fill="#c9935f"/><path d="M150 187 H409 V193 H150z" fill="#a87a52"/>
<path d="M270 170 Q285 160 305 170z" fill="#2f3340"/><rect x="170" y="172" width="22" height="6" fill="#f4f4f4"/>
<rect x="171" y="193" width="27" height="55" fill="#3b3f4e"/><rect x="371" y="193" width="29" height="58" fill="#3b3f4e"/>
<path d="M339 138 L357 136 L359 168 L341 169z" fill="#a9b43c"/>
<path d="M319 118 Q335 110 350 118 L352 168 L316 168z" fill="#1e1e20"/><path d="M333 122 L336 122 L337 150 L333 150z" fill="#c0262b"/>
<circle cx="334" cy="108" r="13" fill="#e3c199"/><path d="M320 104 Q322 90 336 91 Q350 93 348 104z" fill="#80703f"/>
<path d="M320 193 L318 224 L326 226 L330 193z M336 193 L340 226 L348 224 L344 193z" fill="#1b1b1b"/>
<path d="M99 156 L125 159 L154 205 L110 211z" fill="#a9b43c"/>
<path d="M128 210 L112 243 M130 210 L147 241 M130 210 L130 248" stroke="#b4896a" stroke-width="3"/>
<path d="M218 187 L262 183 L267 234 L225 239z" fill="#a9b43c"/>
<path d="M245 239 L226 268 M247 239 L266 266 M246 239 L246 272" stroke="#b4896a" stroke-width="3"/>
<path d="M224 172 Q222 160 235 158 Q248 160 246 172 L258 180 L256 222 L218 222 L216 180z" fill="#eeeeee"/><path d="M222 185 H254 V222 H222z" fill="#5a524d"/>
<path d="M226 158 Q236 150 246 160 L244 168 L228 168z" fill="#8b8276"/>
<path d="M215 222 L200 262 L208 264 L222 226z M232 222 L220 265 L228 266 L240 226z" fill="#222"/>
<path d="M411 175 L454 171 L450 223 L414 222z" fill="#a9b43c"/>
<path d="M432 223 L418 252 M434 223 L448 250 M433 223 L433 256" stroke="#b4896a" stroke-width="3"/>
<path d="M402 175 Q392 120 425 119 Q458 121 449 178z" fill="#9d2b2b"/>
<ellipse cx="421" cy="156" rx="12" ry="15" fill="#b5805f"/><circle cx="417" cy="152" r="3" fill="#fff"/><circle cx="427" cy="152" r="3" fill="#fff"/>
<path d="M406 172 L440 172 L444 226 L404 226z" fill="#1e1e21"/>
<path d="M404 226 L386 250 L382 262 L392 262 L412 232z" fill="#2b2b2b"/>
<path d="M48 82 Q48 61 62 61 Q78 61 77 82z" fill="#7a7040"/>
<ellipse cx="62" cy="91" rx="13" ry="16" fill="#e8c7a0"/>
<path d="M50 88 H60 M64 88 H74" stroke="#222" stroke-width="2.5"/>
<path d="M40 108 L56 104 L62 118 L68 104 L86 110 L98 150 L92 158 L84 136 L82 162 L42 162z" fill="#292929"/>
<path d="M57 105 L62 118 L67 105z" fill="#f3f3f3"/><path d="M61 108 H63 L64 130 L60 130z" fill="#e5c530"/>
<path d="M46 162 H80 L76 218 H66 L63 175 L60 218 H50z" fill="#333336"/>
<path d="M46 218 H58 V223 H44z M64 218 H76 L78 223 H64z" fill="#6b4a36"/>
<path d="M137 80 Q137 44 180 42 Q238 40 241 80 Q243 121 190 122 Q138 122 137 80z" fill="#f1f2f4"/>
<path d="M246 74 Q246 39 300 39 Q350 40 350 76 Q349 113 300 113 Q246 112 246 74z" fill="#f1f2f4"/>
<circle cx="190" cy="80" r="27" fill="none" stroke="#e0b53c" stroke-width="14"/>
<path d="M190 53 A27 27 0 0 0 168 96" fill="none" stroke="#2596b0" stroke-width="14"/>
<text x="190" y="92" font-family="Liberation Sans" font-weight="bold" font-size="30" fill="#2b2b2b" text-anchor="middle">?</text>
<rect x="258" y="76" width="82" height="12" fill="#9c9c9c"/><rect x="262" y="88" width="4" height="16" fill="#888"/><rect x="330" y="88" width="4" height="16" fill="#888"/>
<path d="M262 56 L278 52 L279 74 L263 76z" fill="#1c1c1c"/><circle cx="304" cy="56" r="7" fill="#d8b08c"/><path d="M294 64 H314 L316 78 H292z" fill="#3b7cc4"/><rect x="318" y="70" width="14" height="7" fill="#333"/>
<rect width="504" height="68" fill="url(#g1)"/>
<circle cx="36.5" cy="37" r="21.5" fill="#e6e8ec"/><path d="M18.0 45 A18.5 18.5 0 0 1 32.5 18.5" stroke="#5b8fc7" stroke-width="1.5" fill="none"/><text x="36.5" y="42" font-family="Liberation Sans" font-weight="bold" font-size="14" fill="#3c5a9a" text-anchor="middle">KPS</text>
<text x="70" y="43.8" font-family="Liberation Sans" font-size="19.5" fill="#fff" textLength="296" lengthAdjust="spacingAndGlyphs">Internal Knowledge Management</text>
<circle cx="462" cy="30" r="2.3" fill="#fff"/><circle cx="462" cy="37" r="2.3" fill="#fff"/><circle cx="462" cy="44" r="2.3" fill="#fff"/>
<g transform="translate(214,115)"><path d="M12 0 H64 Q76 0 76 12 V41 Q76 53 64 53 H12 Q0 53 0 41 V12 Q0 0 12 0z" fill="#f00"/><path d="M30 15 L52 26.5 L30 38z" fill="#fff"/></g>
</svg>
<svg class="abs" style="left:57px;top:741px" width="504" height="283" viewBox="0 0 504 283">
<defs>
<radialGradient id="rg2" cx="0.5" cy="0.6" r="0.8"><stop offset="0" stop-color="#86b9b6"/><stop offset=".55" stop-color="#5f9c9c"/><stop offset="1" stop-color="#3a7070"/></radialGradient>
<linearGradient id="g2" x1="0" y1="0" x2="0" y2="1"><stop offset="0" stop-color="#000" stop-opacity=".42"/><stop offset="1" stop-color="#000" stop-opacity="0"/></linearGradient>
</defs>
<rect width="504" height="283" fill="url(#rg2)"/>
<g fill="#fff" opacity=".09">
<path d="M252 160 L0 30 V80z"/><path d="M252 160 L0 150 V200z"/><path d="M252 160 L40 283 H110z"/><path d="M252 160 L504 50 V100z"/><path d="M252 160 L504 180 V230z"/><path d="M252 160 L390 283 H460z"/><path d="M252 160 L110 0 H170z"/><path d="M252 160 L330 0 H390z"/><path d="M252 160 L200 283 H240z"/>
</g>
<path d="M222 176 L146 101 L154 93 L232 166z" fill="#3a3a3a"/>
<path d="M282 176 L356 99 L364 107 L290 184z" fill="#3a3a3a"/>
<circle cx="150" cy="97" r="11" fill="#dcbb8a"/><circle cx="354" cy="95" r="11" fill="#dcbb8a"/>
<path d="M219 172 H284 L286 283 H217z" fill="#3c3c3c"/>
<rect x="236" y="181" width="28" height="78" fill="#f3f3f3"/>
<rect x="228" y="257" width="48" height="26" fill="#161616"/>
<rect x="243" y="160" width="18" height="22" fill="#d9b585"/>
<ellipse cx="208" cy="121" rx="6" ry="9" fill="#d9b585"/><ellipse cx="294" cy="121" rx="6" ry="9" fill="#d9b585"/>
<path d="M210 95 Q211 80 252 80 Q292 80 292 95 L290 150 Q282 172 252 172 Q220 172 212 150z" fill="#e3c396"/>
<path d="M202 72 L212 48 L222 56 L232 40 L244 50 L256 38 L266 50 L280 42 L284 58 L296 60 L292 108 L286 90 Q262 96 240 86 Q228 100 214 102 L210 110z" fill="#5a4535"/>
<rect x="212" y="106" width="32" height="14" rx="5" fill="none" stroke="#141414" stroke-width="4"/><rect x="258" y="106" width="30" height="14" rx="5" fill="none" stroke="#141414" stroke-width="4"/>
<path d="M82 236 L52 206 L60 200 L90 228z M114 236 L146 206 L153 212 L120 242z" fill="#9a6fa8"/>
<circle cx="55" cy="202" r="6.5" fill="#e0bd95"/><circle cx="152" cy="203" r="6.5" fill="#e0bd95"/>
<path d="M74 205 Q70 164 100 164 Q130 164 126 205 L124 226 L76 226z" fill="#3b2418"/>
<ellipse cx="100" cy="206" rx="18" ry="21" fill="#e6c7a0"/>
<circle cx="93" cy="203" r="4" fill="#fff"/><circle cx="107" cy="203" r="4" fill="#fff"/>
<path d="M78 230 H120 L117 283 H82z" fill="#9b70a9"/><path d="M92 230 L100 244 L108 230z" fill="#f4f4f4"/>
<path d="M376 234 L342 205 L349 199 L382 227z M410 234 L444 204 L451 210 L416 240z" fill="#1c2b57"/>
<circle cx="345" cy="201" r="6.5" fill="#e0bd95"/><circle cx="448" cy="202" r="6.5" fill="#e0bd95"/>
<ellipse cx="392" cy="208" rx="21" ry="23" fill="#e6c7a0"/>
<path d="M366 198 Q362 160 396 164 Q428 166 421 204 L414 186 Q392 180 372 204z" fill="#7a6845"/>
<path d="M374 229 H411 L412 283 H374z" fill="#1c2b57"/>
<rect width="504" height="62" fill="url(#g2)"/>
<circle cx="36.8" cy="35.3" r="21" fill="#e6e8ec"/><path d="M18.799999999999997 43.3 A18 18 0 0 1 32.8 17.299999999999997" stroke="#5b8fc7" stroke-width="1.5" fill="none"/><text x="36.8" y="40.3" font-family="Liberation Sans" font-weight="bold" font-size="14" fill="#3c5a9a" text-anchor="middle">KPS</text>
<text x="70.7" y="45" font-family="Liberation Sans" font-size="19.5" fill="#fff" textLength="364" lengthAdjust="spacingAndGlyphs">Contact Centre &amp; Knowledge Managem...</text>
<circle cx="462" cy="29.700000000000003" r="2.3" fill="#fff"/><circle cx="462" cy="36.7" r="2.3" fill="#fff"/><circle cx="462" cy="43.7" r="2.3" fill="#fff"/>
<g transform="translate(214,116)"><path d="M12 0 H64 Q76 0 76 12 V41 Q76 53 64 53 H12 Q0 53 0 41 V12 Q0 0 12 0z" fill="#f00"/><path d="M30 15 L52 26.5 L30 38z" fill="#fff"/></g>
</svg>
<svg class="abs" style="left:1246px;top:1048px" width="10" height="8"><path d="M7.5 0 V6.5 H1" stroke="#555" stroke-width="1.6" fill="none"/></svg>
<svg class="abs" style="left:1875px;top:587px" width="10" height="8"><path d="M7.5 0 V6.5 H1" stroke="#555" stroke-width="1.6" fill="none"/></svg>
</body></html>
